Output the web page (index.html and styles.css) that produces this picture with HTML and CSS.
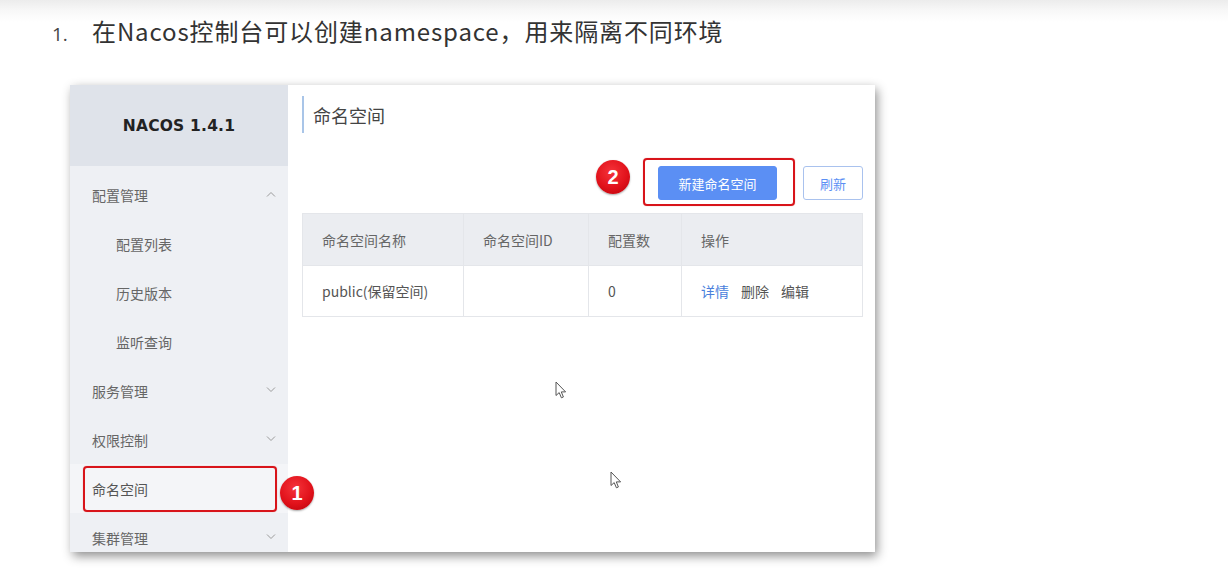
FILE: index.html
```html
<!DOCTYPE html>
<html lang="zh-CN">
<head>
<meta charset="utf-8">
<title>Nacos namespace</title>
<link rel="stylesheet" href="styles.css">
</head>
<body>
<div class="page">
  <div class="step">
    <span class="step-num">1.</span>
    <span class="step-text">在Nacos控制台可以创建namespace，用来隔离不同环境</span>
  </div>

  <div class="shot">
    <aside class="sidebar">
      <div class="brand">NACOS 1.4.1</div>
      <ul class="menu">
        <li class="menu-item parent">配置管理
          <svg class="chev" width="10" height="6" viewBox="0 0 10 6"><polyline points="1,5.5 5,1.5 9,5.5" fill="none" stroke="#9a9a9a" stroke-width="1"/></svg>
        </li>
        <li class="menu-item sub">配置列表</li>
        <li class="menu-item sub">历史版本</li>
        <li class="menu-item sub">监听查询</li>
        <li class="menu-item parent">服务管理
          <svg class="chev" width="10" height="6" viewBox="0 0 10 6"><polyline points="1,0.5 5,4.5 9,0.5" fill="none" stroke="#9a9a9a" stroke-width="1"/></svg>
        </li>
        <li class="menu-item parent">权限控制
          <svg class="chev" width="10" height="6" viewBox="0 0 10 6"><polyline points="1,0.5 5,4.5 9,0.5" fill="none" stroke="#9a9a9a" stroke-width="1"/></svg>
        </li>
        <li class="menu-item parent active">命名空间
          <span class="mark mark-1"></span>
          <span class="badge badge-1">1</span>
        </li>
        <li class="menu-item parent">集群管理
          <svg class="chev" width="10" height="6" viewBox="0 0 10 6"><polyline points="1,0.5 5,4.5 9,0.5" fill="none" stroke="#9a9a9a" stroke-width="1"/></svg>
        </li>
      </ul>
    </aside>

    <main class="content">
      <div class="title">命名空间</div>
      <div class="toolbar">
        <div class="btn-wrap">
          <span class="badge badge-2">2</span>
          <span class="mark mark-2"></span>
          <button class="btn btn-primary">新建命名空间</button>
        </div>
        <button class="btn btn-normal">刷新</button>
      </div>
      <table class="grid">
        <colgroup>
          <col class="c1"><col class="c2"><col class="c3"><col class="c4">
        </colgroup>
        <thead>
          <tr><th>命名空间名称</th><th>命名空间ID</th><th>配置数</th><th>操作</th></tr>
        </thead>
        <tbody>
          <tr>
            <td>public(保留空间)</td>
            <td></td>
            <td>0</td>
            <td><span class="link">详情</span><span class="op">删除</span><span class="op">编辑</span></td>
          </tr>
        </tbody>
      </table>

      <svg class="cursor cursor-a" width="12" height="19" viewBox="0 0 12 19"><path d="M1 1 L1 14.5 L4.2 11.6 L6.4 16.8 L8.4 16 L6.3 10.9 L10.6 10.9 Z" fill="#fff" stroke="#555" stroke-width="1" stroke-linejoin="round"/></svg>
      <svg class="cursor cursor-b" width="12" height="19" viewBox="0 0 12 19"><path d="M1 1 L1 14.5 L4.2 11.6 L6.4 16.8 L8.4 16 L6.3 10.9 L10.6 10.9 Z" fill="#fff" stroke="#555" stroke-width="1" stroke-linejoin="round"/></svg>
    </main>
  </div>
</div>
</body>
</html>
```

FILE: styles.css
```css
html, body {
  margin: 0;
  padding: 0;
}

body {
  background: linear-gradient(to bottom, #ececec 0px, #f7f7f7 10px, #ffffff 22px) no-repeat;
  background-color: #ffffff;
  font-family: "Noto Sans CJK SC", "Noto Sans", sans-serif;
  color: #333;
  width: 1228px;
  height: 571px;
  overflow: hidden;
}

.page {
  padding-top: 15px;
}

.step {
  display: flex;
  align-items: baseline;
  height: 32px;
  padding-left: 52px;
  color: #333;
}

.step-num {
  width: 40px;
  font-family: "Open Sans", "Noto Sans", sans-serif;
  font-size: 19px;
  color: #444;
}

.step-text {
  font-size: 24px;
  line-height: 32px;
  letter-spacing: 0.88px;
}

.shot {
  margin-left: 70px;
  margin-top: 38px;
  width: 804px;
  height: 467px;
  display: flex;
  background: #fff;
  box-shadow: 3px 4px 10px rgba(0, 0, 0, 0.45);
  position: relative;
}

/* Sidebar */
.sidebar {
  width: 218px;
  flex: none;
  background: #eef0f4;
  display: flex;
  flex-direction: column;
  overflow: visible;
  position: relative;
  z-index: 2;
}

.brand {
  height: 81px;
  background: #dfe3ea;
  display: flex;
  align-items: center;
  justify-content: center;
  font-family: "DejaVu Sans", sans-serif;
  font-weight: bold;
  font-size: 15.5px;
  color: #222;
  letter-spacing: 0.2px;
}

.menu {
  list-style: none;
  margin: 0;
  padding: 4px 0 0 0;
  height: 382px;
  overflow: visible;
}

.menu-item {
  height: 49px;
  display: flex;
  align-items: center;
  font-size: 14px;
  color: #666;
  position: relative;
}

.menu-item.parent {
  padding-left: 22px;
}

.menu-item.sub {
  padding-left: 46px;
}

.menu-item.active {
  background: #f4f5f8;
  color: #555;
}

.chev {
  position: absolute;
  right: 12px;
  top: 21px;
}

.mark {
  position: absolute;
  border: 2px solid #d8141a;
  border-radius: 4px;
  box-sizing: border-box;
  box-shadow: 0 0 1px rgba(200, 0, 0, 0.5);
  pointer-events: none;
}

.mark-1 {
  left: 13px;
  top: 2px;
  width: 194px;
  height: 46px;
}

.badge {
  position: absolute;
  width: 34px;
  height: 34px;
  border-radius: 50%;
  background: radial-gradient(circle at 45% 35%, #f5333a 0%, #e1121b 55%, #b50009 100%);
  color: #fff;
  font-family: "Liberation Sans", Arial, sans-serif;
  font-weight: bold;
  font-size: 20px;
  display: flex;
  align-items: center;
  justify-content: center;
  box-shadow: 0 1px 2px rgba(0, 0, 0, 0.35);
}

.badge-1 {
  left: 210px;
  top: 12px;
}

/* Content */
.content {
  flex: 1;
  position: relative;
  padding: 11px 12px 0 14px;
  background: #fff;
}

.title {
  border-left: 2px solid #a9c5e8;
  height: 37px;
  display: flex;
  align-items: center;
  padding-left: 9px;
  font-size: 18px;
  color: #444;
}

.toolbar {
  margin-top: 33px;
  display: flex;
  justify-content: flex-end;
  align-items: center;
  gap: 26px;
}

.btn-wrap {
  position: relative;
}

.btn {
  height: 34px;
  border-radius: 3px;
  font-family: "Noto Sans CJK SC", sans-serif;
  font-size: 13px;
  padding: 0;
  display: block;
}

.btn-primary {
  width: 119px;
  background: #5b8ff4;
  color: #fff;
  border: 1px solid #5b8ff4;
}

.btn-normal {
  width: 60px;
  background: #fff;
  color: #5b8ff4;
  border: 1px solid #a9c2ee;
}

.mark-2 {
  left: -15px;
  top: -8px;
  width: 152px;
  height: 48px;
}

.badge-2 {
  left: -62px;
  top: -6px;
}

.grid {
  margin-top: 13px;
  width: 560px;
  border-collapse: collapse;
  table-layout: fixed;
  font-size: 14px;
  color: #555;
}

.grid .c1 { width: 161px; }
.grid .c2 { width: 125px; }
.grid .c3 { width: 93px; }
.grid .c4 { width: 181px; }

.grid th,
.grid td {
  text-align: left;
  padding: 0 0 0 19px;
  border: 1px solid #e4e6ea;
  font-weight: normal;
}

.grid th {
  height: 51px;
  background: #ebedf1;
  color: #666;
}

.grid td {
  height: 50px;
  color: #555;
}

.link {
  color: #4a7fdc;
  margin-right: 12px;
}

.op {
  margin-right: 12px;
  color: #555;
}

.cursor {
  position: absolute;
}

.cursor-a {
  left: 267px;
  top: 296px;
}

.cursor-b {
  left: 322px;
  top: 386px;
}
```
